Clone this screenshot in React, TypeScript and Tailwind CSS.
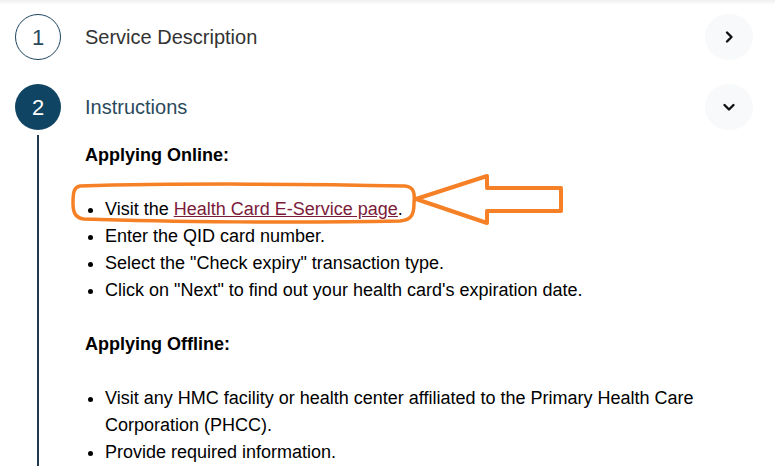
import React from "react";

const Chevron = ({ dir }: { dir: "right" | "down" }) => (
  <svg width="14" height="14" viewBox="0 0 14 14" fill="none">
    {dir === "right" ? (
      <path d="M5 2.5 L9.5 7 L5 11.5" stroke="#111" strokeWidth="2.4" strokeLinecap="round" strokeLinejoin="round" />
    ) : (
      <path d="M2.5 5 L7 9.5 L11.5 5" stroke="#111" strokeWidth="2.4" strokeLinecap="round" strokeLinejoin="round" />
    )}
  </svg>
);

const ToggleButton = ({ dir }: { dir: "right" | "down" }) => (
  <button className="w-[48px] h-[46px] rounded-full bg-[#f8f9fa] flex items-center justify-center">
    <Chevron dir={dir} />
  </button>
);

// orange hand-drawn highlight that sits over the first bullet
const Annotation = () => (
  <svg className="absolute left-0 top-0 pointer-events-none" width="775" height="472" viewBox="0 0 775 472" fill="none">
    <path
      d="M80 186 C 180 183, 320 184, 405 186 C 414 187, 415 193, 414 203 C 414 214, 412 220, 400 221 C 300 223, 170 222, 84 219 C 75 218, 73 212, 73 203 C 73 192, 74 187, 80 186 Z"
      stroke="#f58025"
      strokeWidth="3.5"
    />
    <path
      d="M416 199 L487 176 L487 188 L561 188 L561 211 L487 211 L487 223 Z"
      stroke="#f58025"
      strokeWidth="4"
      strokeLinejoin="round"
    />
  </svg>
);

export default function App() {
  return (
    <div className="relative w-[775px] h-[472px] overflow-hidden bg-white font-['Liberation_Sans',Arial,sans-serif]">
      <div className="h-[5px] bg-gradient-to-b from-[#efefef] to-white" />

      <div className="pl-[15px] pr-[22px] pt-[9px]">
        {/* Step 1 */}
        <div className="flex items-center">
          <div className="w-[46px] h-[46px] rounded-full border-[1.5px] border-[#1d4560] flex items-center justify-center text-[22px] text-[#2b4a5e]">
            1
          </div>
          <div className="ml-[24px] flex-1 flex items-center justify-between">
            <span className="text-[20px] text-[#333]">Service Description</span>
            <ToggleButton dir="right" />
          </div>
        </div>

        {/* Step 2 */}
        <div className="flex mt-[24px]">
          <div className="w-[46px] flex flex-col items-center">
            <div className="w-[46px] h-[46px] rounded-full bg-[#0f4462] flex items-center justify-center text-[22px] text-white">
              2
            </div>
            <div className="w-[2px] flex-1 mt-[5px] bg-[#1f3a4d]" />
          </div>
          <div className="ml-[24px] flex-1">
            <div className="h-[46px] flex items-center justify-between">
              <span className="text-[20px] text-[#2a4a5c]">Instructions</span>
              <ToggleButton dir="down" />
            </div>
            <div className="pt-[12px] pr-[20px] text-[18px] leading-[27px] text-black">
              <p className="font-bold">Applying Online:</p>
              <p>&nbsp;</p>
              <ul className="list-disc pl-[20px]">
                <li>
                  Visit the{" "}
                  <a href="#" className="text-[#7b1b3a] underline">
                    Health Card E-Service page
                  </a>
                  .
                </li>
                <li>Enter the QID card number.</li>
                <li>Select the "Check expiry" transaction type.</li>
                <li>Click on "Next" to find out your health card's expiration date.</li>
              </ul>
              <p>&nbsp;</p>
              <p className="font-bold">Applying Offline:</p>
              <p>&nbsp;</p>
              <ul className="list-disc pl-[20px]">
                <li>Visit any HMC facility or health center affiliated to the Primary Health Care Corporation (PHCC).</li>
                <li>Provide required information.</li>
              </ul>
            </div>
          </div>
        </div>
      </div>

      <Annotation />
    </div>
  );
}
